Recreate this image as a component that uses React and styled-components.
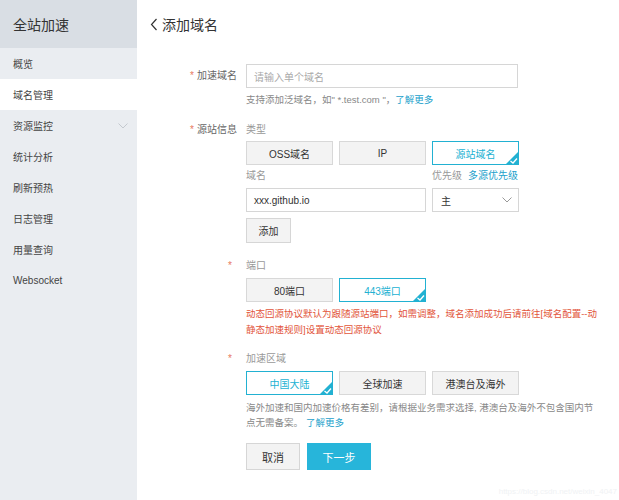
import React from 'react';
import styled, { createGlobalStyle } from 'styled-components';

const GlobalStyle = createGlobalStyle`
  html, body {
    margin: 0;
    padding: 0;
    background: #fff;
  }
  body {
    font-family: "Liberation Sans", "Noto Sans CJK SC", sans-serif;
    color: #333;
  }
  * {
    box-sizing: border-box;
  }
`;

const TEAL = '#22b1d2';
const LINK = '#1c9fcb';

const Page = styled.div`
  display: flex;
  width: 619px;
  height: 500px;
  overflow: hidden;
  position: relative;
`;

const Sidebar = styled.aside`
  width: 137px;
  flex-shrink: 0;
  background: #eaedf1;
  display: flex;
  flex-direction: column;
`;

const SideHeader = styled.div`
  height: 48px;
  display: flex;
  align-items: center;
  padding-left: 13px;
  background: #d9dee4;
  font-size: 14px;
  color: #333;
`;

const MenuItem = styled.div`
  height: 31px;
  display: flex;
  align-items: center;
  justify-content: space-between;
  padding: 0 9px 0 13px;
  font-size: 10px;
  color: #444;
  background: ${(p) => (p.active ? '#fff' : 'transparent')};
`;

const Main = styled.main`
  flex: 1;
  display: flex;
  flex-direction: column;
`;

const TitleBar = styled.div`
  height: 48px;
  display: flex;
  align-items: center;
  gap: 4px;
  padding-left: 13px;
  font-size: 14px;
  color: #333;
`;

const Form = styled.div`
  display: flex;
  flex-direction: column;
  padding-top: 16px;
`;

const Row = styled.div`
  display: grid;
  grid-template-columns: 100px 274px;
  column-gap: 9px;
  margin-top: ${(p) => p.mt || 0}px;
`;

const Label = styled.div`
  text-align: right;
  font-size: 10px;
  color: #666;
  line-height: ${(p) => p.lh || 16}px;
  white-space: nowrap;
  padding-right: ${(p) => p.pr || 0}px;
`;

const Star = styled.span`
  color: #e8795e;
  margin-right: 3px;
`;

const Content = styled.div`
  display: flex;
  flex-direction: column;
  align-items: flex-start;
`;

const SubLabel = styled.div`
  font-size: 10px;
  line-height: 16px;
  color: #999;
  margin-top: ${(p) => p.mt || 0}px;
  display: flex;
  gap: 6px;
`;

const Link = styled.span`
  color: ${LINK};
`;

const TextInput = styled.div`
  width: ${(p) => p.w}px;
  height: 24px;
  border: 1px solid #d6d6d6;
  display: flex;
  align-items: center;
  padding-left: 7px;
  font-size: 10px;
  color: ${(p) => (p.placeholder ? '#aaa' : '#333')};
  background: #fff;
`;

const Help = styled.div`
  font-size: 9.5px;
  line-height: ${(p) => p.lh || 16}px;
  color: ${(p) => (p.error ? '#e2553b' : '#888')};
  margin-top: ${(p) => p.mt || 0}px;
  width: ${(p) => p.w || 360}px;
  display: flex;
  flex-wrap: wrap;
  gap: 0 ${(p) => p.gap || 0}px;
`;

const Choices = styled.div`
  display: flex;
  gap: 6px;
  margin-top: ${(p) => p.mt || 0}px;
`;

const Choice = styled.div`
  position: relative;
  width: 87px;
  height: 24px;
  display: flex;
  align-items: center;
  justify-content: center;
  font-size: 10px;
  border: 1px solid ${(p) => (p.selected ? TEAL : '#d8d8d8')};
  background: ${(p) => (p.selected ? '#fff' : '#f3f3f3')};
  color: ${(p) => (p.selected ? TEAL : '#333')};
`;

const Corner = styled.svg`
  position: absolute;
  right: -1px;
  bottom: -1px;
`;

const InputRow = styled.div`
  display: flex;
  gap: 6px;
  margin-top: ${(p) => p.mt || 0}px;
`;

const Select = styled.div`
  width: 87px;
  height: 24px;
  border: 1px solid #d6d6d6;
  display: flex;
  align-items: center;
  justify-content: space-between;
  padding: 0 6px 0 8px;
  font-size: 10px;
  color: #333;
`;

const PriorityRow = styled.div`
  display: flex;
  gap: 6px;
  margin-top: ${(p) => p.mt || 0}px;
`;

const Field = styled.div`
  width: ${(p) => p.w}px;
`;

const Button = styled.div`
  height: ${(p) => p.h || 25}px;
  width: ${(p) => p.w}px;
  display: flex;
  align-items: center;
  justify-content: center;
  font-size: ${(p) => p.fs || 10}px;
  margin-top: ${(p) => p.mt || 0}px;
  border: 1px solid ${(p) => (p.primary ? '#27b5da' : '#d6d6d6')};
  background: ${(p) => (p.primary ? '#27b5da' : '#f3f3f3')};
  color: ${(p) => (p.primary ? '#fff' : '#333')};
`;

const Actions = styled.div`
  display: flex;
  gap: 7px;
  margin-top: 13px;
`;

const Watermark = styled.div`
  position: absolute;
  right: 2px;
  bottom: 4px;
  font-size: 8px;
  color: #f0f2f4;
`;

const Check = () => (
  <Corner width="14" height="14" viewBox="0 0 14 14">
    <polygon points="14,0 14,14 0,14" fill={TEAL} />
    <polyline points="5.5,10 8,12 12,7.5" fill="none" stroke="#fff" strokeWidth="1.3" />
  </Corner>
);

const ChevronDown = ({ color = '#999' }) => (
  <svg width="10" height="6" viewBox="0 0 10 6">
    <polyline points="0.5,0.5 5,5 9.5,0.5" fill="none" stroke={color} strokeWidth="1" />
  </svg>
);

const ChoiceButton = ({ selected, children }) => (
  <Choice selected={selected}>
    {children}
    {selected && <Check />}
  </Choice>
);

const menu = ['概览', '域名管理', '资源监控', '统计分析', '刷新预热', '日志管理', '用量查询', 'Websocket'];

export default function App() {
  return (
    <Page>
      <GlobalStyle />
      <Sidebar>
        <SideHeader>全站加速</SideHeader>
        {menu.map((m) => (
          <MenuItem key={m} active={m === '域名管理'}>
            <span>{m}</span>
            {m === '资源监控' && <ChevronDown color="#c4c9cf" />}
          </MenuItem>
        ))}
      </Sidebar>
      <Main>
        <TitleBar>
          <svg width="8" height="13" viewBox="0 0 8 13">
            <polyline points="6.5,1 1.5,6.5 6.5,12" fill="none" stroke="#333" strokeWidth="1.2" />
          </svg>
          添加域名
        </TitleBar>
        <Form>
          <Row>
            <Label lh={24}>
              <Star>*</Star>加速域名
            </Label>
            <Content>
              <TextInput w={272} placeholder>请输入单个域名</TextInput>
              <Help mt={4}>
                <span>支持添加泛域名，如" *.test.com "，</span>
                <Link>了解更多</Link>
              </Help>
            </Content>
          </Row>

          <Row mt={14}>
            <Label>
              <Star>*</Star>源站信息
            </Label>
            <Content>
              <SubLabel>类型</SubLabel>
              <Choices mt={3}>
                <ChoiceButton>OSS域名</ChoiceButton>
                <ChoiceButton>IP</ChoiceButton>
                <ChoiceButton selected>源站域名</ChoiceButton>
              </Choices>
              <PriorityRow mt={3}>
                <Field w={180}>
                  <SubLabel>域名</SubLabel>
                </Field>
                <SubLabel>
                  优先级<Link>多源优先级</Link>
                </SubLabel>
              </PriorityRow>
              <InputRow mt={4}>
                <TextInput w={180}>xxx.github.io</TextInput>
                <Select>
                  <span>主</span>
                  <ChevronDown />
                </Select>
              </InputRow>
              <Button w={45} mt={6}>添加</Button>
            </Content>
          </Row>

          <Row mt={15}>
            <Label pr={2}>
              <Star>*</Star>
            </Label>
            <Content>
              <SubLabel>端口</SubLabel>
              <Choices mt={4}>
                <ChoiceButton>80端口</ChoiceButton>
                <ChoiceButton selected>443端口</ChoiceButton>
              </Choices>
              <Help error mt={4} w={352}>
                动态回源协议默认为跟随源站端口，如需调整，域名添加成功后请前往[域名配置--动静态加速规则]设置动态回源协议
              </Help>
            </Content>
          </Row>

          <Row mt={13}>
            <Label pr={2}>
              <Star>*</Star>
            </Label>
            <Content>
              <SubLabel>加速区域</SubLabel>
              <Choices mt={4}>
                <ChoiceButton selected>中国大陆</ChoiceButton>
                <ChoiceButton>全球加速</ChoiceButton>
                <ChoiceButton selected={false}>港澳台及海外</ChoiceButton>
              </Choices>
              <Help lh={15} mt={5} w={352} gap={3}>
                <span>海外加速和国内加速价格有差别，请根据业务需求选择, 港澳台及海外不包含国内节</span>
                <span>点无需备案。</span>
                <Link>了解更多</Link>
              </Help>
              <Actions>
                <Button w={54} h={27} fs={11}>取消</Button>
                <Button w={64} h={27} fs={11} primary>下一步</Button>
              </Actions>
            </Content>
          </Row>
        </Form>
      </Main>
      <Watermark>https://blog.csdn.net/weixin_4047</Watermark>
    </Page>
  );
}
